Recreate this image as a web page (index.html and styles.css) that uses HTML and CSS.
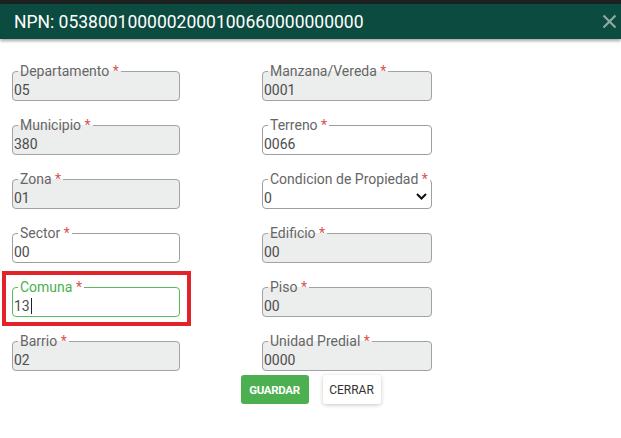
FILE: index.html
```html
<!DOCTYPE html>
<html lang="es">
<head>
<meta charset="utf-8">
<title>NPN</title>
<link rel="stylesheet" href="styles.css">
</head>
<body>
<div class="backdrop-strip"></div>
<header class="modal-header">
  <h1 class="modal-title">NPN: 0538001000002000100660000000000</h1>
  <button class="close-btn" aria-label="Cerrar">
    <svg width="15" height="15" viewBox="0 0 15 15"><path d="M1.5 1.5 L13.5 13.5 M13.5 1.5 L1.5 13.5" stroke="#8ea9a2" stroke-width="2.2" fill="none"/></svg>
  </button>
</header>
<main class="modal-body">
  <div class="form-grid">
    <fieldset class="field disabled"><legend>Departamento <span class="req">*</span></legend><div class="value">05</div></fieldset>
    <fieldset class="field disabled wide"><legend>Manzana/Vereda <span class="req">*</span></legend><div class="value">0001</div></fieldset>

    <fieldset class="field disabled"><legend>Municipio <span class="req">*</span></legend><div class="value">380</div></fieldset>
    <fieldset class="field wide"><legend>Terreno <span class="req">*</span></legend><div class="value">0066</div></fieldset>

    <fieldset class="field disabled"><legend>Zona <span class="req">*</span></legend><div class="value">01</div></fieldset>
    <fieldset class="field wide select"><legend>Condicion de Propiedad <span class="req">*</span></legend><div class="value"><span>0</span><svg class="chev" width="11" height="7" viewBox="0 0 11 7"><path d="M1 1 L5.5 5.5 L10 1" stroke="#111" stroke-width="2" fill="none"/></svg></div></fieldset>

    <fieldset class="field"><legend>Sector <span class="req">*</span></legend><div class="value">00</div></fieldset>
    <fieldset class="field disabled wide"><legend>Edificio <span class="req">*</span></legend><div class="value">00</div></fieldset>

    <div class="highlight">
      <fieldset class="field focused"><legend>Comuna <span class="req">*</span></legend><div class="value">13<span class="caret"></span></div></fieldset>
    </div>
    <fieldset class="field disabled wide"><legend>Piso <span class="req">*</span></legend><div class="value">00</div></fieldset>

    <fieldset class="field disabled"><legend>Barrio <span class="req">*</span></legend><div class="value">02</div></fieldset>
    <fieldset class="field disabled wide"><legend>Unidad Predial <span class="req">*</span></legend><div class="value">0000</div></fieldset>
  </div>
  <div class="actions">
    <button class="btn btn-save">GUARDAR</button>
    <button class="btn btn-close">CERRAR</button>
  </div>
</main>
</body>
</html>
```

FILE: styles.css
```css
* { box-sizing: border-box; }
html, body { margin: 0; padding: 0; }
body {
  width: 621px;
  height: 438px;
  background: #ffffff;
  font-family: Roboto, "Liberation Sans", Arial, sans-serif;
  overflow: hidden;
}
.backdrop-strip {
  height: 4px;
  background: #1d2220;
}
.modal-header {
  height: 35px;
  background: #0c4b3f;
  display: flex;
  align-items: center;
  justify-content: space-between;
  padding: 0 3px 0 14px;
  box-shadow: 0 2px 3px rgba(0,0,0,0.35);
  position: relative;
}
.modal-title {
  margin: 0;
  font-size: 17.5px;
  font-weight: 400;
  color: #ffffff;
  letter-spacing: 0;
  line-height: 20px;
}
.close-btn {
  background: none;
  border: 0;
  padding: 0;
  width: 18px;
  height: 18px;
  display: flex;
  align-items: center;
  justify-content: center;
}
.modal-body {
  padding: 25px 0 0 12px;
}
.form-grid {
  display: grid;
  grid-template-columns: 168px 170px;
  column-gap: 82px;
  row-gap: 17px;
}
.field {
  margin: 0;
  padding: 0 0 0 1px;
  border: 1px solid #9e9e9e;
  border-radius: 4px;
  background: #ffffff;
  min-width: 0;
}
.field.disabled {
  background: #eceeed;
  border-color: #a2a2a2;
}
.field legend {
  margin-left: 4px;
  padding: 0 2px;
  font-size: 14px;
  line-height: 14px;
  color: #666666;
}
.req { color: #d9534f; }
.value {
  height: 22px;
  padding-top: 2px;
  font-size: 14px;
  line-height: 20px;
  color: #4d4d4d;
}
.select .value {
  display: flex;
  align-items: center;
  justify-content: space-between;
  padding-right: 4px;
}
.chev { margin-top: -3px; }
.field.focused {
  border-color: #5cb85c;
}
.field.focused legend { color: #4caf50; }
.caret {
  display: inline-block;
  width: 1px;
  height: 16px;
  background: #222;
  vertical-align: -3px;
  margin-left: 1px;
}
.highlight {
  position: relative;
}
.highlight::after {
  content: "";
  position: absolute;
  top: -9px;
  left: -10px;
  right: -11px;
  bottom: -9px;
  border: 4px solid #e3232a;
  pointer-events: none;
}
.actions {
  display: flex;
  justify-content: center;
  gap: 14px;
  margin-top: 4px;
  padding-right: 12px;
}
.btn {
  font-family: Roboto, "Liberation Sans", Arial, sans-serif;
  border: 0;
  border-radius: 3px;
  height: 29px;
  font-size: 11.5px;
  cursor: pointer;
}
.btn-save {
  width: 68px;
  background: #4caf50;
  color: #ffffff;
  font-weight: 700;
  letter-spacing: -0.3px;
}
.btn-close {
  width: 58px;
  background: #ffffff;
  color: #333333;
  box-shadow: 0 1px 4px rgba(0,0,0,0.22);
  font-size: 12px;
}
```
